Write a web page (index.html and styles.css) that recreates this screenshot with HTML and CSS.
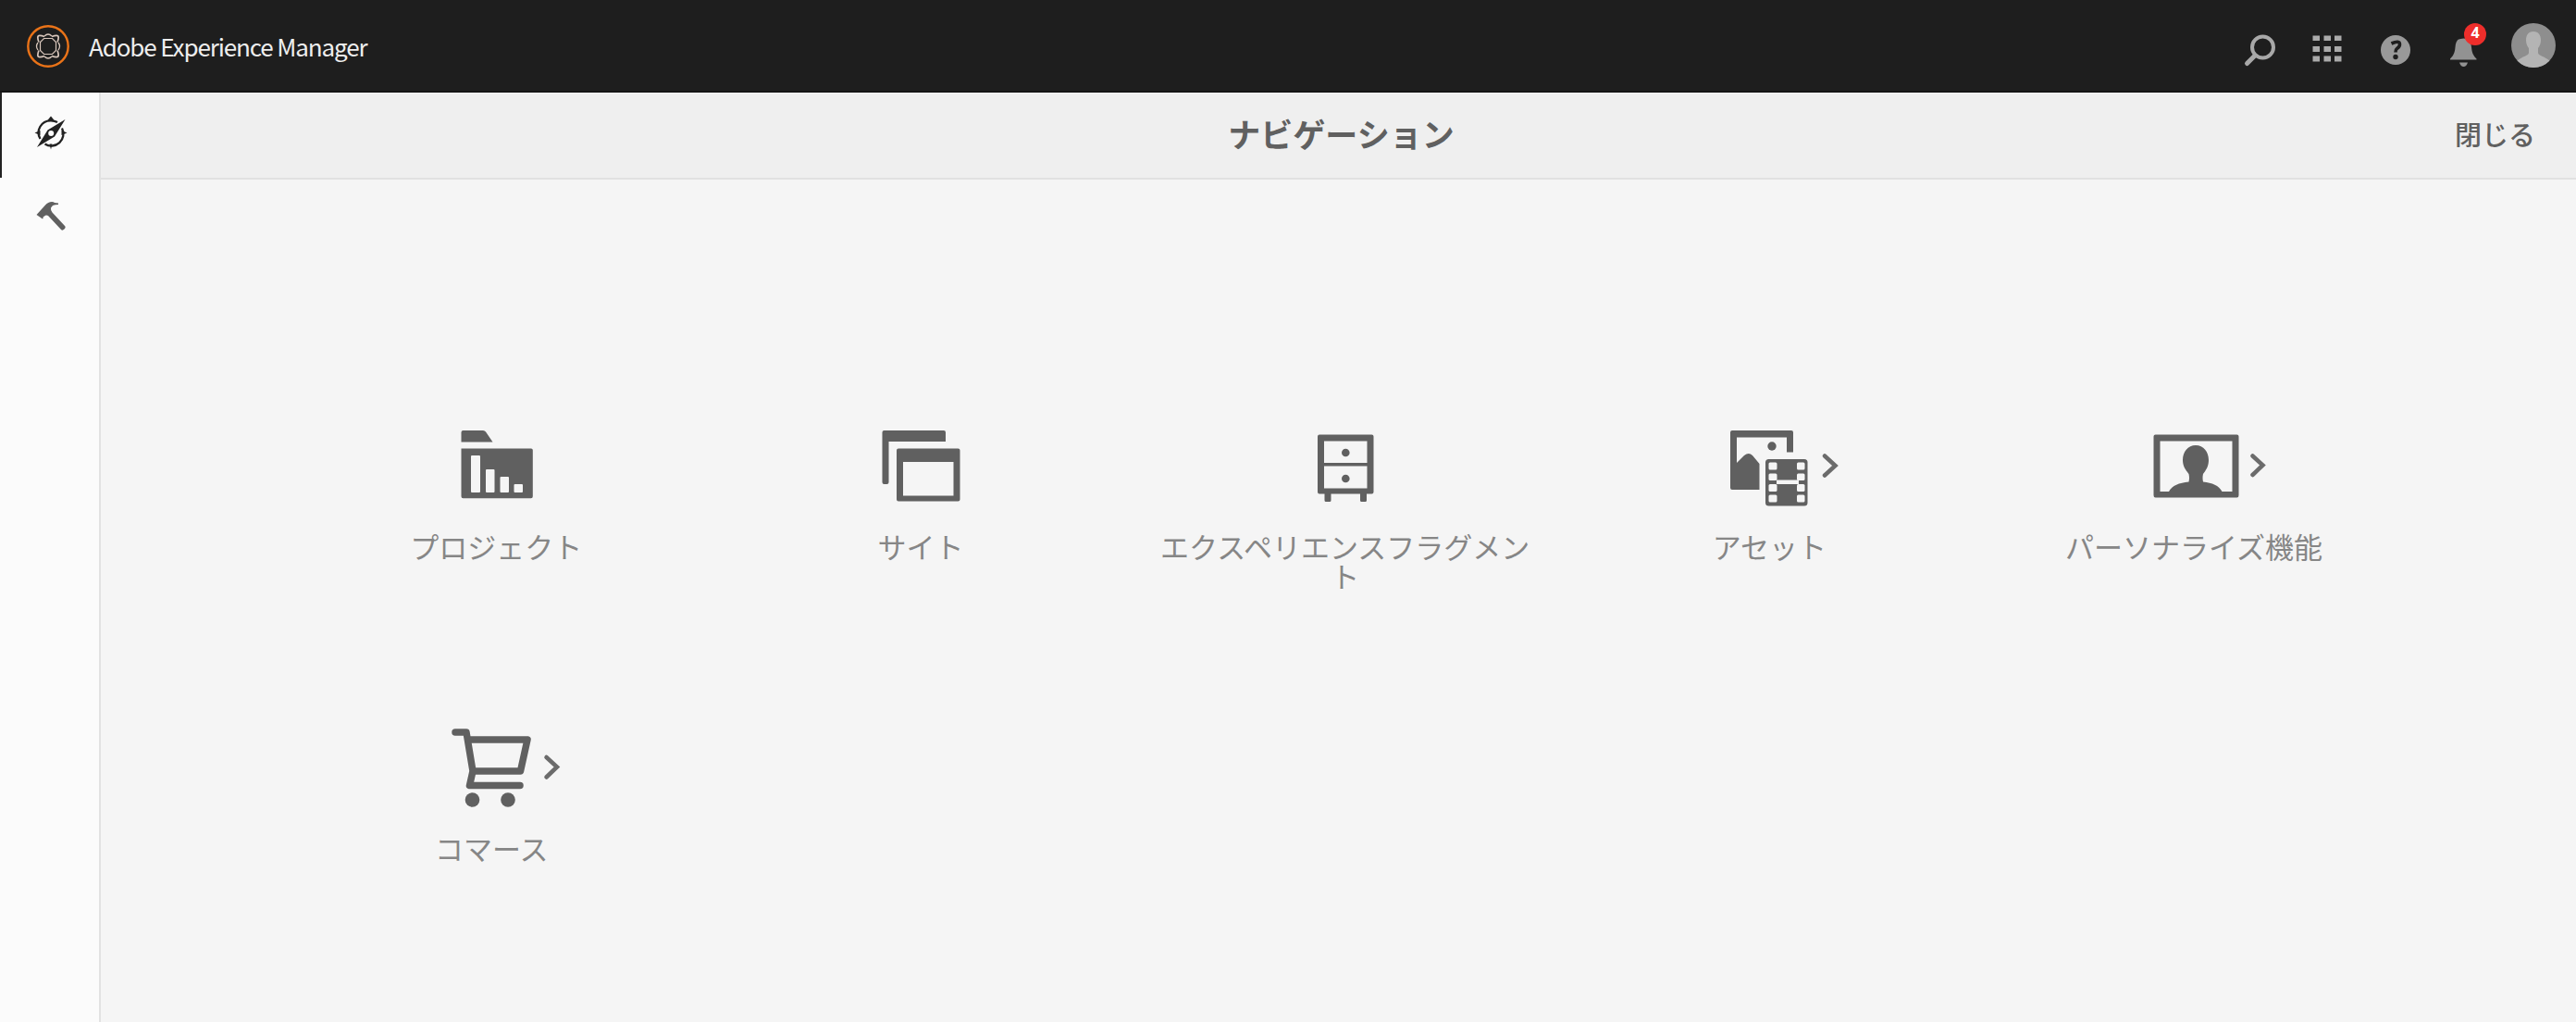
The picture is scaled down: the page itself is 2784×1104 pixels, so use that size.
FILE: index.html
```html
<!DOCTYPE html>
<html lang="ja">
<head>
<meta charset="utf-8">
<title>Adobe Experience Manager</title>
<link rel="stylesheet" href="styles.css">
</head>
<body>
<header class="shell">
  <svg class="logo" viewBox="0 0 48 48" fill="none">
    <circle cx="24" cy="24" r="21.7" stroke="#ea7318" stroke-width="2.4"/>
    <g stroke="#d8c6bb">
      <path d="M20 13.500q-3-1.200-5-1.200-2.200 0-2.200 2.200 0 2 1.200 5M28 13.500q3-1.200 5-1.200 2.200 0 2.200 2.200 0 2-1.200 5M20 34.500q-3 1.200-5 1.200-2.200 0-2.200-2.200 0-2 1.200-5M28 34.500q3 1.200 5 1.200 2.200 0 2.200-2.200 0-2-1.200-5" stroke-width="1.700"/>
      <path d="M19.500 15.500h9l4 4v9l-4 4h-9l-4-4v-9z" stroke-width="1.200"/>
      <path d="M20 13q4-4 8 0M20 35q4 4 8 0M13 20q-3 4 0 8M35 20q3 4 0 8" stroke-width="1.300"/>
    </g>
  </svg>
  <span class="product">Adobe Experience Manager</span>
  <nav class="actions">
    <svg viewBox="0 0 40 40" fill="none" stroke="#a8a8a8"><circle cx="23.500" cy="18" r="11.500" stroke-width="4"/><path d="M15 27 6.500 35.500" stroke-width="5" stroke-linecap="round"/></svg>
    <svg viewBox="0 0 40 40" fill="#aaa"><path d="M4.500 5.500h7.500v5.500H4.500zM16.500 5.500H24v5.500h-7.500zM28 5.500h7.500v5.500H28zM4.500 17H12v6H4.500zM16.500 17H24v6h-7.500zM28 17h7.500v6H28zM4.500 27.500H12v6H4.500zM16.500 27.500H24v6h-7.500zM28 27.500h7.500v6H28z"/></svg>
    <svg viewBox="0 0 40 40"><circle cx="20" cy="21" r="16" fill="#999"/><path d="M15.500 14q9-4 9 1 0 2.500-3 4.500-1.500 1-1.500 4" fill="none" stroke="#1e1e1e" stroke-width="3.600"/><circle cx="20" cy="28.500" r="2.700" fill="#1e1e1e"/></svg>
    <span class="bell">
      <svg viewBox="0 0 40 40" fill="#929292"><path d="M15.500 10q1-1.500 5-1.500c6 0 8 4 8.500 9.500.5 6 2 9 5.500 12.500v1H6v-1c4-4 5-7 5.500-12.500.300-4 1.500-7.500 4-9zM16 34.500h9q-1.500 4.500-4.500 4.500T16 34.500z"/></svg>
      <span class="badge">4</span>
    </span>
    <svg class="avatar" viewBox="0 0 48 48"><circle cx="24" cy="24" r="24" fill="#8e8e8e"/><path d="M24 9c5.500 0 8 4 8 9.500 0 4-1.500 6.500-3 8.500v5c0 3 7 4 12.500 8.500A24 24 0 0 1 24 48 24 24 0 0 1 6.500 40.500C12 36 19 35 19 32v-5c-1.500-2-3-4.500-3-8.500C16 13 18.500 9 24 9z" fill="#b4b4b4"/></svg>
  </nav>
</header>
<div class="workspace">
  <aside class="rail">
    <a class="rail-item active">
      <svg viewBox="0 0 40 40"><g fill="none" stroke="#222" stroke-width="2.300"><path d="M27 9Q24 7.300 20 7.300A13 13 0 0 0 8.500 27M32 15.500A13 13 0 0 1 13.500 32.500"/></g><path d="M20 2.500l4.500 5.500h-9zM2.500 20.500l6-2.500v5zM37.500 20.500l-6-2.500v5zM20 38.500l-1.500-6h3zM35.500 6 24 24.500 5 36 16.500 17.500z" fill="#222"/><circle cx="20.200" cy="21" r="3" fill="#fbfbfb"/></svg>
    </a>
    <a class="rail-item">
      <svg viewBox="0 0 40 40"><path d="M4.500 17 14 6.500q3-3.500 7-3.500 2 0 3 1l4 .5v1.500q-3.500.2-6 1L20 9.500q-.5 3 1.500 5L35 29q1.500 1.500-.5 3.500T31 33L17 18q-2.500-1-4 .5l-1.500 1q.5 1-.5 2z" fill="#606060"/></svg>
    </a>
  </aside>
  <main class="panel">
    <div class="panel-head">
      <h1 class="title">ナビゲーション</h1>
      <a class="close">閉じる</a>
    </div>
    <div class="tiles">
      <a class="tile">
        <svg viewBox="0 0 180 100"><path d="M52.500 27.500V17q0-2 2-2h21.500q2 0 3 1.500l7.500 11zM52.500 34.500h75.500q1.800 0 1.800 1.800v50q0 2-2 2H54.500q-2 0-2-2z"/><g class="cut"><rect x="63" y="42" width="10" height="40" rx="1"/><rect x="79" y="57" width="9.500" height="25" rx="1"/><rect x="94.500" y="65" width="9.500" height="17" rx="1"/><rect x="109.500" y="73" width="9.500" height="9" rx="1"/></g></svg>
        <span class="label">プロジェクト</span>
      </a>
      <a class="tile">
        <svg viewBox="0 0 180 100"><path d="M50.500 15h64.500q2 0 2 2v10H55.500v44q0 2-2 2h-3q-2 0-2-2V17q0-2 2-2z"/><path fill-rule="evenodd" d="M66 34.500h64.500q2 0 2 2v53q0 2-2 2H66q-2 0-2-2v-53q0-2 2-2zM71 49v36.500h54.500V49z"/></svg>
        <span class="label">サイト</span>
      </a>
      <a class="tile">
        <svg viewBox="0 0 180 100"><path fill-rule="evenodd" d="M62 19.500h56.500q2 0 2 2v60q0 2-2 2h-5.500v7q0 1.500-1.500 1.500h-4q-1.500 0-1.500-1.500v-7H74.500v7q0 1.500-1.500 1.500h-4q-1.500 0-1.500-1.500v-7H62q-2 0-2-2v-60q0-2 2-2zM67 26.500V50h46.500V26.500zM67 53.500v24h46.500v-24z"/><circle cx="90.300" cy="39" r="4.300"/><circle cx="90.300" cy="67" r="4.300"/></svg>
        <span class="label">エクスペリエンスフラグメント</span>
      </a>
      <a class="tile">
        <svg viewBox="0 0 180 100"><path d="M50 15h64q2 0 2 2v21.500h-7V22.500H55V50l8-8q5-4 9 0l7.500 9v28H50q-2 0-2-2V17q0-2 2-2z"/><circle cx="93" cy="32" r="4.700"/><rect x="86" y="46" width="45.500" height="50.500" rx="3.500"/><g class="cut"><path d="M98 68.500h24v4.500H98z"/><rect x="89.500" y="49.500" width="9" height="8" rx="1.500"/><rect x="89.500" y="61.500" width="9" height="7.500" rx="1.500"/><rect x="89.500" y="73" width="9" height="8" rx="1.500"/><rect x="89.500" y="84.500" width="9" height="8" rx="1.500"/><rect x="120" y="49.500" width="8.500" height="8" rx="1.500"/><rect x="120" y="61.500" width="8.500" height="7.500" rx="1.500"/><rect x="120" y="73" width="8.500" height="8" rx="1.500"/><rect x="120" y="84.500" width="8.500" height="8" rx="1.500"/></g><path class="chevron" d="M150 42.500 161.500 53 150 63.500"/></svg>
        <span class="label">アセット</span>
      </a>
      <a class="tile">
        <svg viewBox="0 0 180 100"><path fill-rule="evenodd" d="M48.500 19.500h88q2 0 2 2V85q0 2.500-2 2.500h-88q-2 0-2-2.500V21.500q0-2 2-2zM53.500 26.500V81h78V26.500z"/><path d="M92 31c8.500 0 14 7 14 16 0 7-3 11-6 15-.8 3.500-.5 6 0 8.500 10 1 17 4 20.500 10.500l-2 2h-54l-1.500-2C66.500 74.500 74 71.500 84.500 70.500c.5-2.500.800-5 0-8.500-3-4-6.500-8-6.500-15 0-9 5.500-16 14-16z"/><path class="chevron" d="M153.500 42.500 164.500 52.500 153.500 63"/></svg>
        <span class="label">パーソナライズ機能</span>
      </a>
      <a class="tile shifted">
        <svg viewBox="0 0 180 100"><path d="M51 15h12l7 42h51.500L129 23H65M70 57l-3.500 15.500H121" fill="none" stroke="#606060" stroke-width="7.500" stroke-linecap="round" stroke-linejoin="round"/><circle cx="69.500" cy="88" r="7.800"/><circle cx="108" cy="88" r="7.800"/><path class="chevron" d="M149.500 42 161 52.500 149.500 63.500"/></svg>
        <span class="label">コマース</span>
      </a>
    </div>
  </main>
</div>
</body>
</html>
```
FILE: styles.css
```css
* { box-sizing: border-box; }
body {
  margin: 0;
  height: 1104px;
  display: flex;
  flex-direction: column;
  background: #f5f5f5;
  font-family: "Noto Sans CJK JP", "Noto Sans", sans-serif;
  overflow: hidden;
}
.shell {
  flex: 0 0 100px;
  display: flex;
  align-items: center;
  padding: 0 22px 0 28px;
  background: #1e1e1e;
  border-bottom: 2px solid #141414;
}
.logo { width: 48px; height: 48px; margin-top: 2px; }
.product {
  margin-left: 20px;
  color: #eee;
  font-size: 26px;
  line-height: 36px;
  letter-spacing: -1.120px;
  margin-top: 1px;
}
.actions { margin-left: auto; display: flex; align-items: center; }
.actions svg { display: block; width: 40px; height: 40px; margin: 7px 33.500px 0 0; }
.actions > svg:first-child { margin-left: 1px; }
.bell { position: relative; }
.badge {
  position: absolute;
  left: 21px;
  top: -1px;
  width: 24px;
  height: 24px;
  border-radius: 50%;
  background: #ee2e2b;
  color: #fff;
  font: 700 16px/21px "Open Sans", sans-serif;
  text-align: center;
}
.actions .bell svg { margin-right: 32px; }
.actions .avatar { width: 48px; height: 48px; margin: 0; }
.workspace { flex: 1; display: flex; min-height: 0; }
.rail {
  flex: 0 0 109px;
  background: #fbfbfb;
  border-right: 2px solid #e2e2e2;
}
.rail-item {
  display: flex;
  height: 92px;
  padding: 23px 0 0 35px;
}
.rail-item.active { border-left: 2px solid #222; padding-left: 33px; }
.rail-item svg { width: 40px; height: 40px; }
.panel { flex: 1; display: flex; flex-direction: column; }
.panel-head {
  flex: 0 0 94px;
  display: grid;
  grid-template-columns: 1fr auto 1fr;
  align-items: center;
  padding: 0 44px 4px 50px;
  background: #efefef;
  border-bottom: 2px solid #e1e1e1;
  color: #606060;
}
.title { grid-column: 2; margin: 0; font-size: 35px; line-height: 50px; font-weight: 700; }
.close { justify-self: end; font-size: 29px; line-height: 44px; font-weight: 500; }
.tiles {
  display: grid;
  grid-template-columns: repeat(5, 458.700px);
  grid-auto-rows: 326px;
  padding: 256px 0 0 198px;
}
.tile { display: flex; flex-direction: column; align-items: center; }
.tile svg { width: 180px; height: 100px; fill: #606060; }
.tile .cut { fill: #f5f5f5; }
.tile .chevron { fill: none; stroke: #6b6b6b; stroke-width: 4.500px; stroke-linecap: round; }
.label {
  width: 406px;
  margin-top: 24px;
  color: #868686;
  font-size: 31px;
  line-height: 32px;
  font-weight: 400;
  text-align: center;
  word-break: break-all;
}
.shifted { padding-right: 10px; }
```
